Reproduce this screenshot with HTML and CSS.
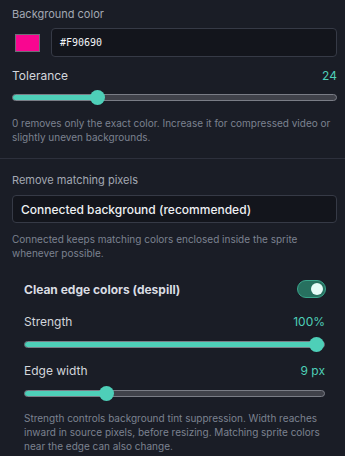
FILE: index.html
```html
<!DOCTYPE html>
<html>
<head>
<meta charset="utf-8">
<link rel="stylesheet" href="styles.css">
</head>
<body>
<div class="panel">
  <section class="section top">
    <div class="label">Background color</div>
    <div class="color-row">
      <div class="swatch"></div>
      <div class="hex-input">#F90690</div>
    </div>
    <div class="value-row tol">
      <span class="title">Tolerance</span>
      <span class="value">24</span>
    </div>
    <div class="slider s-tol">
      <div class="track"><div class="fill" style="width:85px"></div></div>
      <div class="thumb" style="left:78px"></div>
    </div>
    <p class="help h-tol">0 removes only the exact color. Increase it for compressed video or slightly uneven backgrounds.</p>
  </section>
  <section class="section mid">
    <div class="label">Remove matching pixels</div>
    <div class="select">Connected background (recommended)</div>
    <p class="help h-mid">Connected keeps matching colors enclosed inside the sprite whenever possible.</p>
  </section>
  <section class="section sub">
    <div class="toggle-row">
      <span class="toggle-title">Clean edge colors (despill)</span>
      <span class="toggle"><span class="knob"></span></span>
    </div>
    <div class="value-row strength">
      <span class="title">Strength</span>
      <span class="value">100%</span>
    </div>
    <div class="slider s-str">
      <div class="track"><div class="fill" style="width:100%"></div></div>
      <div class="thumb" style="left:285px"></div>
    </div>
    <div class="value-row edge">
      <span class="title">Edge width</span>
      <span class="value">9 px</span>
    </div>
    <div class="slider s-edge">
      <div class="track"><div class="fill" style="width:82px"></div></div>
      <div class="thumb" style="left:75px"></div>
    </div>
    <p class="help h-sub">Strength controls background tint suppression. Width reaches inward in source pixels, before resizing. Matching sprite colors near the edge can also change.</p>
  </section>
</div>
</body>
</html>
```

FILE: styles.css
```css
* { box-sizing: border-box; }
html, body {
  margin: 0;
  padding: 0;
  background: #1a1d26;
  font-family: Inter, "Noto Sans", sans-serif;
  color: #d5d8de;
}
.panel {
  width: 345px;
  height: 456px;
  overflow: hidden;
}
.section {
  display: flex;
  flex-direction: column;
}
.top {
  padding: 6px 8px 0 12px;
  border-bottom: 1px solid #2d303c;
}
.label {
  font-size: 11px;
  line-height: 16px;
  color: #a3a8b3;
}
.color-row {
  display: flex;
  align-items: center;
  margin-top: 6px;
  height: 29px;
}
.swatch {
  width: 25px;
  height: 18px;
  margin-left: 3px;
  margin-right: 11px;
  background: #F90690;
  border: 1px solid #6d6f78;
}
.hex-input {
  flex: 1;
  height: 29px;
  display: flex;
  align-items: center;
  padding-left: 8px;
  background: #13151c;
  border: 1px solid #363a46;
  border-radius: 4px;
  font-family: "DejaVu Sans Mono", monospace;
  font-size: 10px;
  color: #f2f4f7;
}
.value-row {
  display: flex;
  justify-content: space-between;
  align-items: center;
  font-size: 12px;
  line-height: 16px;
}
.value-row .title { color: #d3d6dc; }
.value-row .value { color: #4ecfb8; }
.tol { margin-top: 11px; }
.slider {
  position: relative;
  height: 15px;
  display: flex;
  align-items: center;
}
.s-tol { margin-top: 6px; }
.track {
  width: 100%;
  height: 7px;
  border: 1px solid #7a7d86;
  border-radius: 4px;
  background: #40424a;
  overflow: hidden;
}
.fill {
  height: 100%;
  background: #4ecfb8;
}
.thumb {
  position: absolute;
  top: 0;
  width: 15px;
  height: 15px;
  border-radius: 50%;
  background: #4ecfb8;
}
.help {
  margin: 0;
  font-size: 10px;
  line-height: 14px;
  color: #7c8290;
}
.h-tol { margin-top: 11px; margin-bottom: 14px; }
.mid {
  padding: 13px 8px 0 12px;
}
.select {
  margin-top: 7px;
  height: 28px;
  display: flex;
  align-items: center;
  padding-left: 8px;
  background: #13151c;
  border: 1px solid #363a46;
  border-radius: 4px;
  font-size: 12px;
  font-weight: 500;
  color: #eef0f3;
}
.h-mid { margin-top: 9px; }
.sub {
  padding: 20px 20px 0 24px;
}
.toggle-row {
  display: flex;
  justify-content: space-between;
  align-items: center;
  height: 18px;
}
.toggle-title {
  font-size: 12px;
  font-weight: 700;
  color: #d9dce2;
}
.toggle {
  position: relative;
  width: 29px;
  height: 18px;
  margin-right: -1px;
  border-radius: 9px;
  background: #27705f;
  border: 1px solid #3aa58c;
  display: flex;
  align-items: center;
  justify-content: flex-end;
  padding-right: 2px;
}
.knob {
  width: 12px;
  height: 12px;
  border-radius: 50%;
  background: #e6fbf7;
}
.strength { margin-top: 16px; }
.s-str { margin-top: 7px; }
.edge { margin-top: 11px; }
.s-edge { margin-top: 7px; }
.h-sub { margin-top: 10px; }
```
